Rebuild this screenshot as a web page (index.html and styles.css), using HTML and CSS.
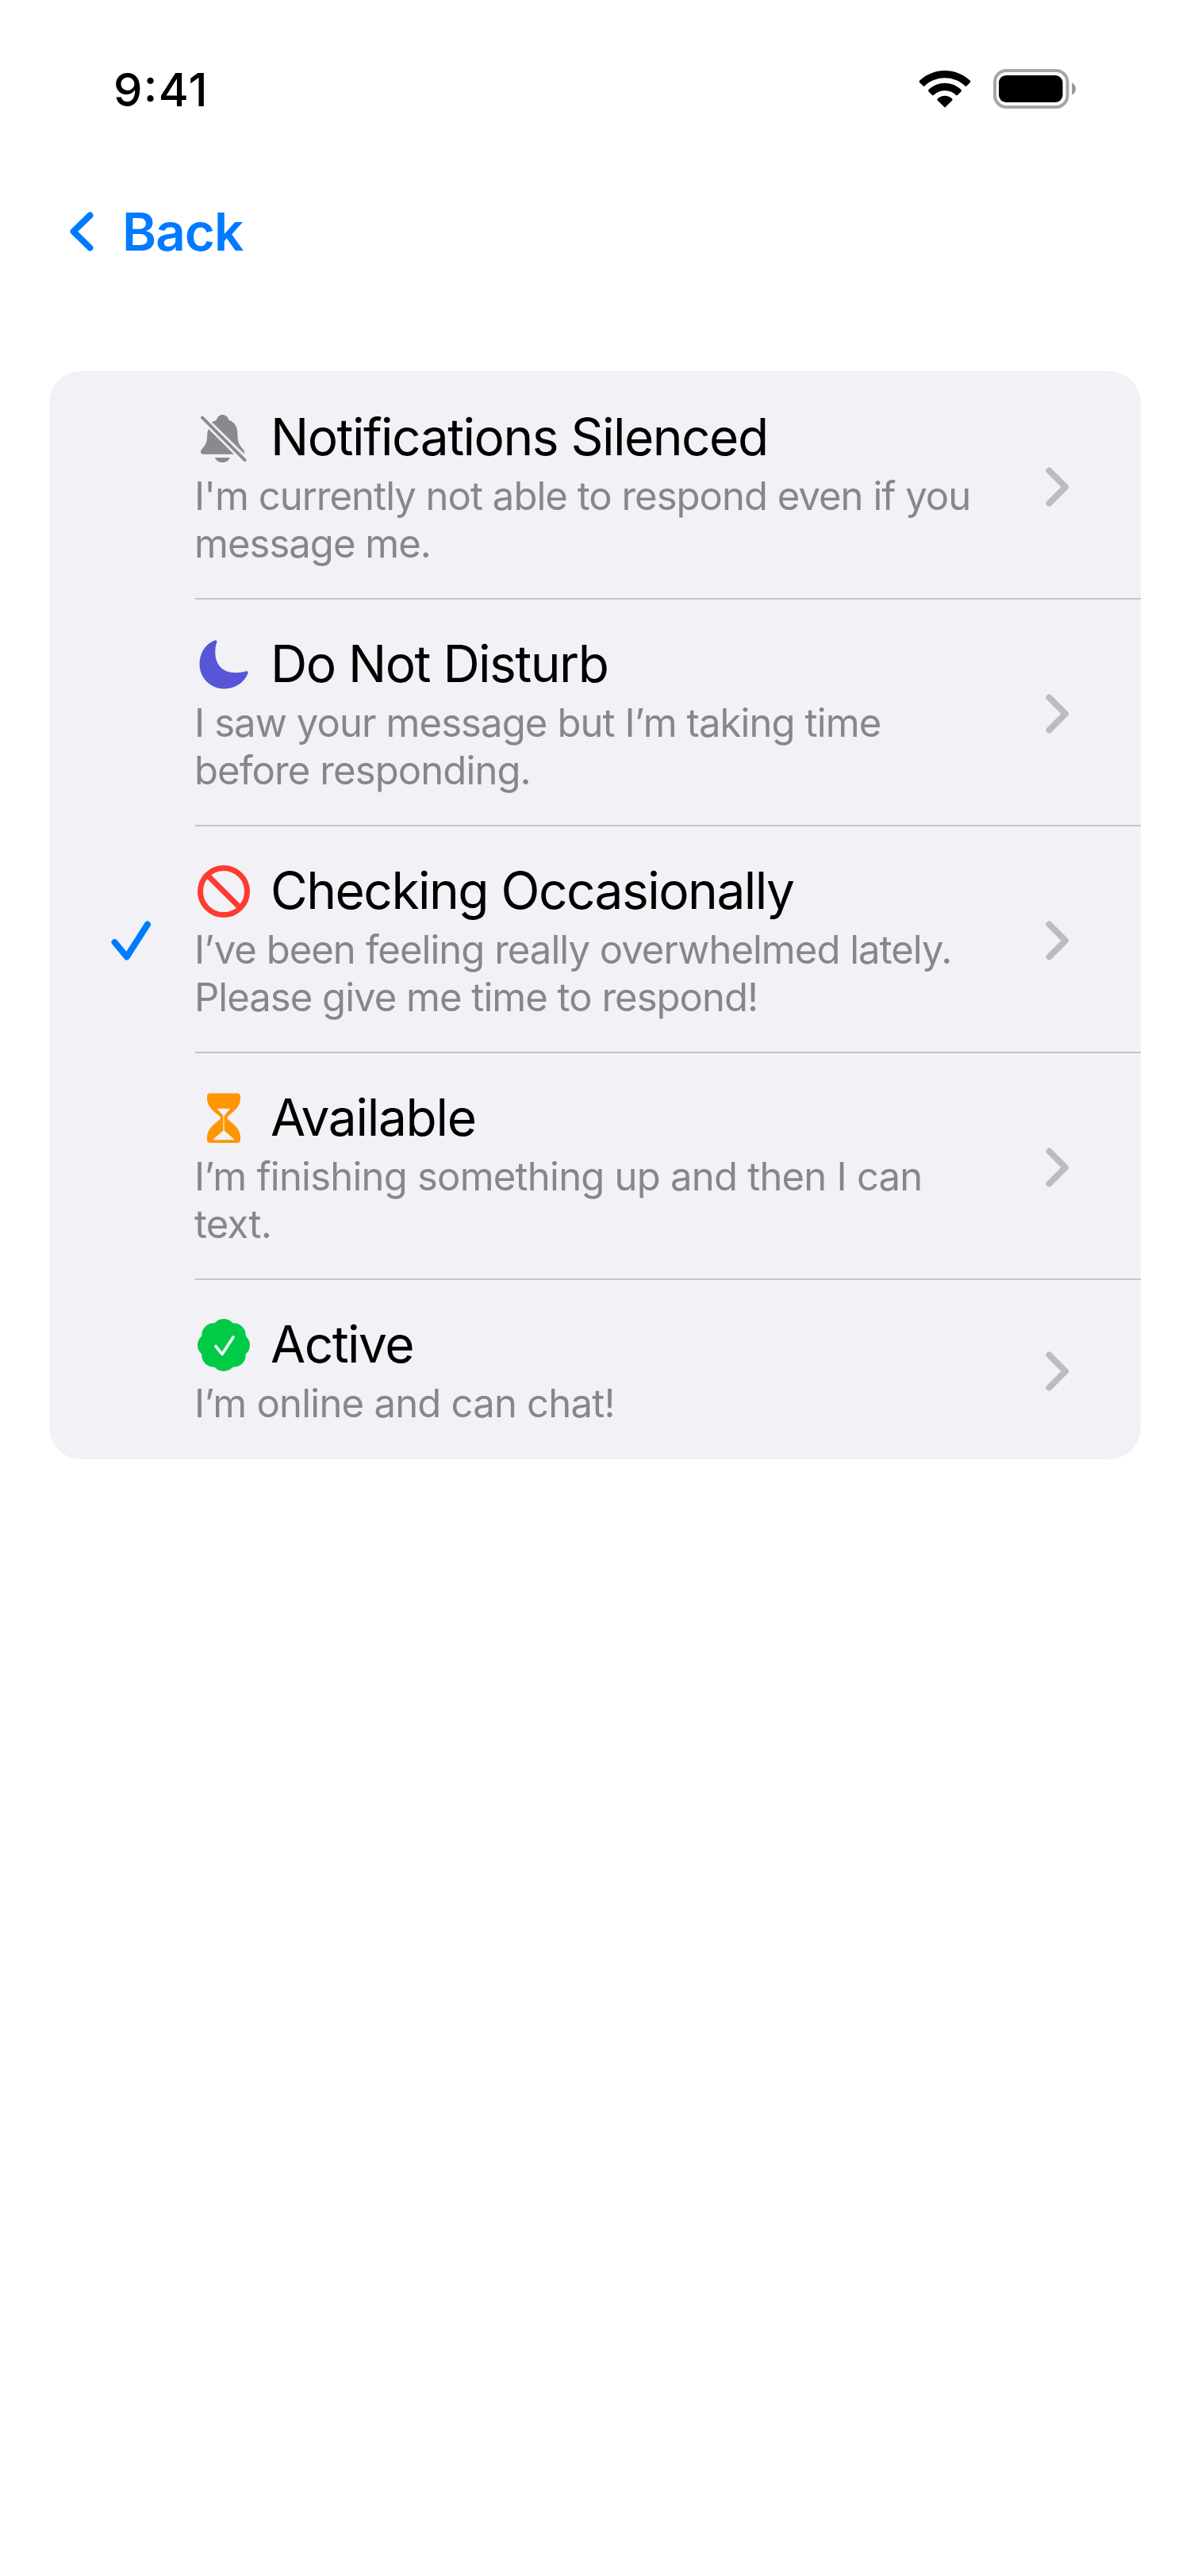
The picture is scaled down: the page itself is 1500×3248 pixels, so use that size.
FILE: index.html
```html
<!DOCTYPE html>
<html lang="en">
<head>
<meta charset="utf-8">
<title>Status</title>
<link rel="stylesheet" href="styles.css">
</head>
<body>
<header class="status-bar">
  <time class="clock">9:41</time>
  <div class="indicators">
    <svg class="wifi" viewBox="0 0 66 47" width="66" height="47">
      <path d="M1.2 12.6C19-4.200 47-4.200 64.800 12.600Q66 13.800 64.900 15L60.600 19.200Q59.500 20.300 58.300 19.200C44 6 22 6 7.700 19.200Q6.500 20.300 5.400 19.200L1.100 15Q0 13.800 1.200 12.600Z"/>
      <path d="M12.600 24C24 13 42 13 53.400 24Q54.600 25.200 53.500 26.400L49.200 30.700Q48.100 31.800 46.900 30.700C39 23.500 27 23.500 19.100 30.700Q17.900 31.800 16.800 30.700L12.500 26.400Q11.400 25.200 12.600 24Z"/>
      <path d="M24 35.300C29 30.500 37 30.500 42 35.300Q43.300 36.500 42.100 37.700L34 45.800Q33 46.800 32 45.800L23.900 37.700Q22.700 36.500 24 35.300Z"/>
    </svg>
    <svg class="battery" viewBox="0 0 105 50" width="105" height="50">
      <rect x="2" y="2" width="91.500" height="46" rx="14.500" fill="none" stroke="#a6a6a6" stroke-width="4"/>
      <rect x="7" y="8" width="80.500" height="34" rx="9"/>
      <path d="M99 17.500C102 18.500 104 21.500 104 25S102 31.500 99 32.500Z" fill="#9b9b9b"/>
    </svg>
  </div>
</header>
<nav class="nav">
  <a class="back">
    <svg class="back-arrow" viewBox="0 0 30 50" width="30" height="50"><path d="M25.500 4.500L4.500 24.800L25.500 45.500"/></svg>
    <span class="back-label">Back</span>
  </a>
</nav>
<main class="list">
  <section class="row row-first">
    <div class="mark"></div>
    <div class="body">
      <div class="text">
        <h2 class="title">
          <svg class="icon" viewBox="0 -1.500 70 70" width="70" height="70" fill="#8a8a8c">
            <path d="M20.500 11.500C23 9.500 25.500 9 27 8.200C27.500 4 31 1.500 34.500 1.500S41.500 4 42.500 8.200C49.500 10.500 53 16 53.300 24C53.600 35 54.500 38.500 60 44.500C62 47 62.500 48 61.800 50.200L22.500 11.800Z"/>
            <path d="M17 19.500L48.800 51.300H10.500C7 51.300 6 48 8 45.300C14 38.500 14.800 36 15.200 28C15.300 23.500 15.700 21.500 17 19.500Z"/>
            <path d="M25 55.500H43.700C42.500 59.500 38.500 61.500 34.400 61.500S26.200 59.500 25 55.500Z"/>
            <path d="M18 13.600L60 55.600" fill="none" stroke="#f2f1f6" stroke-width="7"/>
            <path d="M21.500 11.200L61.500 51.200" fill="none" stroke="#8a8a8c" stroke-width="0.500"/>
            <path d="M9 5L62.700 58.600" fill="none" stroke="#8a8a8c" stroke-width="3.800" stroke-linecap="round"/>
          </svg>
          <span class="name">Notifications Silenced</span>
        </h2>
        <p class="note">I'm currently not able to respond even if you<br>message me.</p>
      </div>
      <svg class="chevron" viewBox="0 0 30 50" width="30" height="50"><path d="M4.500 4.500L25 25L4.500 45.500"/></svg>
    </div>
  </section>
  <section class="row">
    <div class="mark"></div>
    <div class="body">
      <div class="text">
        <h2 class="title">
          <svg class="icon" viewBox="0 -1 70 70" width="70" height="70" fill="#5856d6">
            <path d="M24.500 0.500C26.500-0.300 27.800 1 27.200 3C25.500 7.500 25.300 11 25.300 15.500C25.300 31.500 35 41.200 51 41.200C56 41.200 59.500 40.500 63.500 39.500C66 38.800 67.300 40 66.400 42.300C62 53.500 50.500 61.500 37 61.500C19 61.500 5.500 48 5.500 30C5.500 16.500 13 5 24.500 0.500Z"/>
          </svg>
          <span class="name">Do Not Disturb</span>
        </h2>
        <p class="note note-medium">I saw your message but I’m taking time<br>before responding.</p>
      </div>
      <svg class="chevron" viewBox="0 0 30 50" width="30" height="50"><path d="M4.500 4.500L25 25L4.500 45.500"/></svg>
    </div>
  </section>
  <section class="row">
    <div class="mark"><svg class="check" viewBox="0 0 50 50" width="50" height="50"><path d="M4.500 27L19.800 45.500L46 4.500"/></svg></div>
    <div class="body">
      <div class="text">
        <h2 class="title">
          <svg class="icon" viewBox="0 0 70 70" width="70" height="70" fill="none" stroke="#ff3b30" stroke-width="7">
            <circle cx="36" cy="32" r="29.500"/><path d="M15 11L57 53"/>
          </svg>
          <span class="name">Checking Occasionally</span>
        </h2>
        <p class="note">I’ve been feeling really overwhelmed lately.<br>Please give me time to respond!</p>
      </div>
      <svg class="chevron" viewBox="0 0 30 50" width="30" height="50"><path d="M4.500 4.500L25 25L4.500 45.500"/></svg>
    </div>
  </section>
  <section class="row">
    <div class="mark"></div>
    <div class="body">
      <div class="text">
        <h2 class="title">
          <svg class="icon" viewBox="0 0 70 70" width="70" height="70">
            <path fill="#ff9500" d="M19 0.500H53Q57 0.500 57 4.500V7C57 18 48 23.500 41.500 29.500Q39.500 31.500 41.500 33.500C48 39.500 57 45 57 56V59Q57 63 53 63H19Q15 63 15 59V56C15 45 24 39.500 31 33.500Q33 31.500 31 29.500C24 23.500 15 18 15 7V4.500Q15 0.500 19 0.500Z"/>
            <path fill="#f2f1f6" d="M27.200 19.800H44.700L37.800 27.200Q36.800 28.300 36.600 29.500V47.500L49 58.200Q50 59.200 48.600 59.200H23.400Q22 59.200 23 58.200L35.400 47.500V29.500Q35.200 28.300 34.200 27.200Z"/>
          </svg>
          <span class="name name-short">Available</span>
        </h2>
        <p class="note note-loose">I’m finishing something up and then I can<br>text.</p>
      </div>
      <svg class="chevron" viewBox="0 0 30 50" width="30" height="50"><path d="M4.500 4.500L25 25L4.500 45.500"/></svg>
    </div>
  </section>
  <section class="row row-last">
    <div class="mark"></div>
    <div class="body">
      <div class="text">
        <h2 class="title">
          <svg class="icon" viewBox="0 0 70 70" width="70" height="70">
            <g fill="#00cb47"><circle cx="36" cy="32" r="27"/><circle cx="36" cy="14" r="15"/><circle cx="36" cy="50" r="15"/><circle cx="18" cy="32" r="15"/><circle cx="54" cy="32" r="15"/><circle cx="23.300" cy="19.300" r="15"/><circle cx="48.700" cy="19.300" r="15"/><circle cx="23.300" cy="44.700" r="15"/><circle cx="48.700" cy="44.700" r="15"/></g>
            <path fill="none" stroke="#fff" stroke-width="3.600" stroke-linecap="round" stroke-linejoin="round" d="M26 33.300L34 43.500L48 22"/>
          </svg>
          <span class="name">Active</span>
        </h2>
        <p class="note note-loose">I’m online and can chat!</p>
      </div>
      <svg class="chevron" viewBox="0 0 30 50" width="30" height="50"><path d="M4.500 4.500L25 25L4.500 45.500"/></svg>
    </div>
  </section>
</main>
</body>
</html>
```

FILE: styles.css
```css
* { box-sizing: border-box; }
body {
  margin: 0;
  min-height: 3248px;
  background: #fff;
  color: #000;
  font-family: Inter, "Liberation Sans", sans-serif;
}
svg { display: block; flex: none; overflow: visible; }
.status-bar {
  display: flex;
  justify-content: space-between;
  align-items: center;
  height: 224px;
  padding: 0 143px;
}
.clock {
  font-size: 58px;
  font-weight: 500;
  line-height: 70px;
  letter-spacing: 1.300px;
  font-feature-settings: "case";
  padding-top: 2px;
}
.indicators { display: flex; align-items: center; gap: 28px; }
.nav { height: 244px; padding: 33px 0 0 88px; }
.back { display: flex; align-items: center; gap: 36px; height: 70px; color: #007aff; }
.back-arrow path, .check path {
  fill: none;
  stroke: #007aff;
  stroke-width: 8;
  stroke-linecap: round;
  stroke-linejoin: round;
}
.back-label { font-size: 65.500px; font-weight: 600; line-height: 70px; letter-spacing: -1px; padding-top: 2px; }
.list {
  width: 1376px;
  margin-left: 62px;
  background: #f2f1f6;
  border-radius: 40px;
  overflow: hidden;
}
.row { display: flex; height: 286px; }
.row-first { height: 288px; padding-top: 2px; }
.row-last { height: 226px; }
.mark { width: 184px; display: flex; align-items: center; padding: 1px 0 0 78px; }
.body {
  flex: 1;
  display: flex;
  justify-content: space-between;
  align-items: center;
  padding: 4px 90px 0 0;
  border-bottom: 2px solid #c4c4c7;
}
.row-last .body { border-bottom: 0; }
.text { align-self: flex-start; padding-top: 46px; white-space: nowrap; }
.title {
  display: flex;
  align-items: center;
  gap: 25px;
  height: 70px;
  margin: 0;
  font-weight: 400;
  font-size: 64px;
  line-height: 70px;
}
.name { letter-spacing: -1.520px; padding-bottom: 8px; }
.name-short { letter-spacing: -1.300px; }
.note {
  margin: 0 0 0 -1px;
  padding-top: 6px;
  font-size: 49px;
  line-height: 60px;
  letter-spacing: -0.980px;
  color: #86868b;
}
.note-medium { letter-spacing: -0.900px; }
.note-loose { letter-spacing: -0.780px; }
.chevron path { fill: none; stroke: #bbbbc0; stroke-width: 8; stroke-linecap: round; stroke-linejoin: round; }
```
